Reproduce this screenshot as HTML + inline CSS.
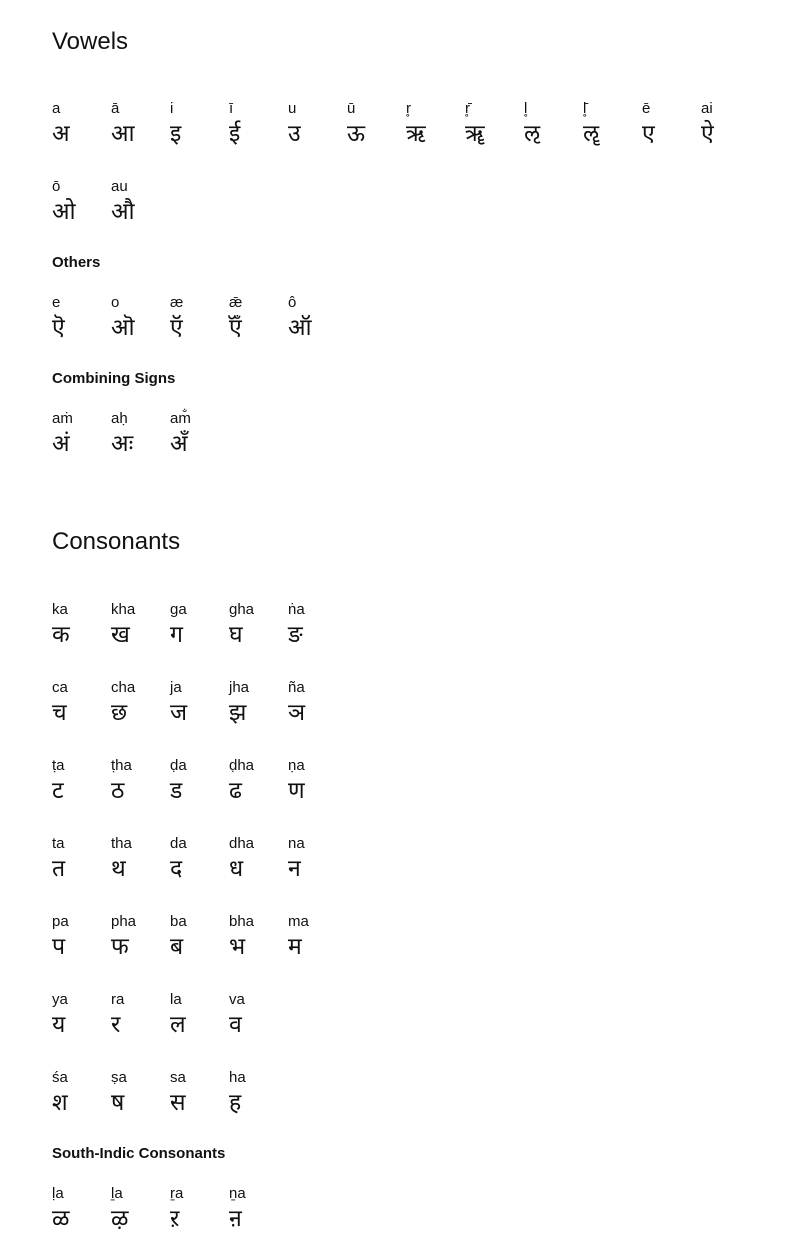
<!DOCTYPE html>
<html><head><meta charset="utf-8"><style>
body{margin:0;width:787px;height:1241px;background:#fff;position:relative;font-family:"Liberation Sans","Noto Sans Devanagari","Lohit Devanagari",sans-serif;color:#111}
.h{position:absolute;left:52px;font-size:24px;line-height:28px}
.s{position:absolute;left:52px;font-size:15px;font-weight:bold;line-height:18px}
.r{position:absolute;left:52px;height:50px}
.c{position:absolute;top:0;width:59px}
.c .l{font-size:15px;line-height:18px;display:block}
.c .g{font-size:23px;line-height:26px;display:block;margin-top:2px}
</style></head><body>
<div class="h" style="top:28px">Vowels</div>
<div class="r" style="top:100px">
<div class="c" style="left:0"><span class="l">a</span><span class="g">अ</span></div>
<div class="c" style="left:59px"><span class="l">ā</span><span class="g">आ</span></div>
<div class="c" style="left:118px"><span class="l">i</span><span class="g">इ</span></div>
<div class="c" style="left:177px"><span class="l">ī</span><span class="g">ई</span></div>
<div class="c" style="left:236px"><span class="l">u</span><span class="g">उ</span></div>
<div class="c" style="left:295px"><span class="l">ū</span><span class="g">ऊ</span></div>
<div class="c" style="left:354px"><span class="l">r̥</span><span class="g">ऋ</span></div>
<div class="c" style="left:413px"><span class="l">r̥̄</span><span class="g">ॠ</span></div>
<div class="c" style="left:472px"><span class="l">l̥</span><span class="g">ऌ</span></div>
<div class="c" style="left:531px"><span class="l">l̥̄</span><span class="g">ॡ</span></div>
<div class="c" style="left:590px"><span class="l">ē</span><span class="g">ए</span></div>
<div class="c" style="left:649px"><span class="l">ai</span><span class="g">ऐ</span></div>
</div>
<div class="r" style="top:178px">
<div class="c" style="left:0"><span class="l">ō</span><span class="g">ओ</span></div>
<div class="c" style="left:59px"><span class="l">au</span><span class="g">औ</span></div>
</div>
<div class="s" style="top:254px">Others</div>
<div class="r" style="top:294px">
<div class="c" style="left:0"><span class="l">e</span><span class="g">ऎ</span></div>
<div class="c" style="left:59px"><span class="l">o</span><span class="g">ऒ</span></div>
<div class="c" style="left:118px"><span class="l">æ</span><span class="g">ऍ</span></div>
<div class="c" style="left:177px"><span class="l">ǣ</span><span class="g">ऍँ</span></div>
<div class="c" style="left:236px"><span class="l">ô</span><span class="g">ऑ</span></div>
</div>
<div class="s" style="top:370px">Combining Signs</div>
<div class="r" style="top:410px">
<div class="c" style="left:0"><span class="l">aṁ</span><span class="g">अं</span></div>
<div class="c" style="left:59px"><span class="l">aḥ</span><span class="g">अः</span></div>
<div class="c" style="left:118px"><span class="l">am̐</span><span class="g">अँ</span></div>
</div>
<div class="h" style="top:528px">Consonants</div>
<div class="r" style="top:601px">
<div class="c" style="left:0"><span class="l">ka</span><span class="g">क</span></div>
<div class="c" style="left:59px"><span class="l">kha</span><span class="g">ख</span></div>
<div class="c" style="left:118px"><span class="l">ga</span><span class="g">ग</span></div>
<div class="c" style="left:177px"><span class="l">gha</span><span class="g">घ</span></div>
<div class="c" style="left:236px"><span class="l">ṅa</span><span class="g">ङ</span></div>
</div>
<div class="r" style="top:679px">
<div class="c" style="left:0"><span class="l">ca</span><span class="g">च</span></div>
<div class="c" style="left:59px"><span class="l">cha</span><span class="g">छ</span></div>
<div class="c" style="left:118px"><span class="l">ja</span><span class="g">ज</span></div>
<div class="c" style="left:177px"><span class="l">jha</span><span class="g">झ</span></div>
<div class="c" style="left:236px"><span class="l">ña</span><span class="g">ञ</span></div>
</div>
<div class="r" style="top:757px">
<div class="c" style="left:0"><span class="l">ṭa</span><span class="g">ट</span></div>
<div class="c" style="left:59px"><span class="l">ṭha</span><span class="g">ठ</span></div>
<div class="c" style="left:118px"><span class="l">ḍa</span><span class="g">ड</span></div>
<div class="c" style="left:177px"><span class="l">ḍha</span><span class="g">ढ</span></div>
<div class="c" style="left:236px"><span class="l">ṇa</span><span class="g">ण</span></div>
</div>
<div class="r" style="top:835px">
<div class="c" style="left:0"><span class="l">ta</span><span class="g">त</span></div>
<div class="c" style="left:59px"><span class="l">tha</span><span class="g">थ</span></div>
<div class="c" style="left:118px"><span class="l">da</span><span class="g">द</span></div>
<div class="c" style="left:177px"><span class="l">dha</span><span class="g">ध</span></div>
<div class="c" style="left:236px"><span class="l">na</span><span class="g">न</span></div>
</div>
<div class="r" style="top:913px">
<div class="c" style="left:0"><span class="l">pa</span><span class="g">प</span></div>
<div class="c" style="left:59px"><span class="l">pha</span><span class="g">फ</span></div>
<div class="c" style="left:118px"><span class="l">ba</span><span class="g">ब</span></div>
<div class="c" style="left:177px"><span class="l">bha</span><span class="g">भ</span></div>
<div class="c" style="left:236px"><span class="l">ma</span><span class="g">म</span></div>
</div>
<div class="r" style="top:991px">
<div class="c" style="left:0"><span class="l">ya</span><span class="g">य</span></div>
<div class="c" style="left:59px"><span class="l">ra</span><span class="g">र</span></div>
<div class="c" style="left:118px"><span class="l">la</span><span class="g">ल</span></div>
<div class="c" style="left:177px"><span class="l">va</span><span class="g">व</span></div>
</div>
<div class="r" style="top:1069px">
<div class="c" style="left:0"><span class="l">śa</span><span class="g">श</span></div>
<div class="c" style="left:59px"><span class="l">ṣa</span><span class="g">ष</span></div>
<div class="c" style="left:118px"><span class="l">sa</span><span class="g">स</span></div>
<div class="c" style="left:177px"><span class="l">ha</span><span class="g">ह</span></div>
</div>
<div class="s" style="top:1145px">South-Indic Consonants</div>
<div class="r" style="top:1185px">
<div class="c" style="left:0"><span class="l">ḷa</span><span class="g">ळ</span></div>
<div class="c" style="left:59px"><span class="l">ḻa</span><span class="g">ऴ</span></div>
<div class="c" style="left:118px"><span class="l">ṟa</span><span class="g">ऱ</span></div>
<div class="c" style="left:177px"><span class="l">ṉa</span><span class="g">ऩ</span></div>
</div>
</body></html>
